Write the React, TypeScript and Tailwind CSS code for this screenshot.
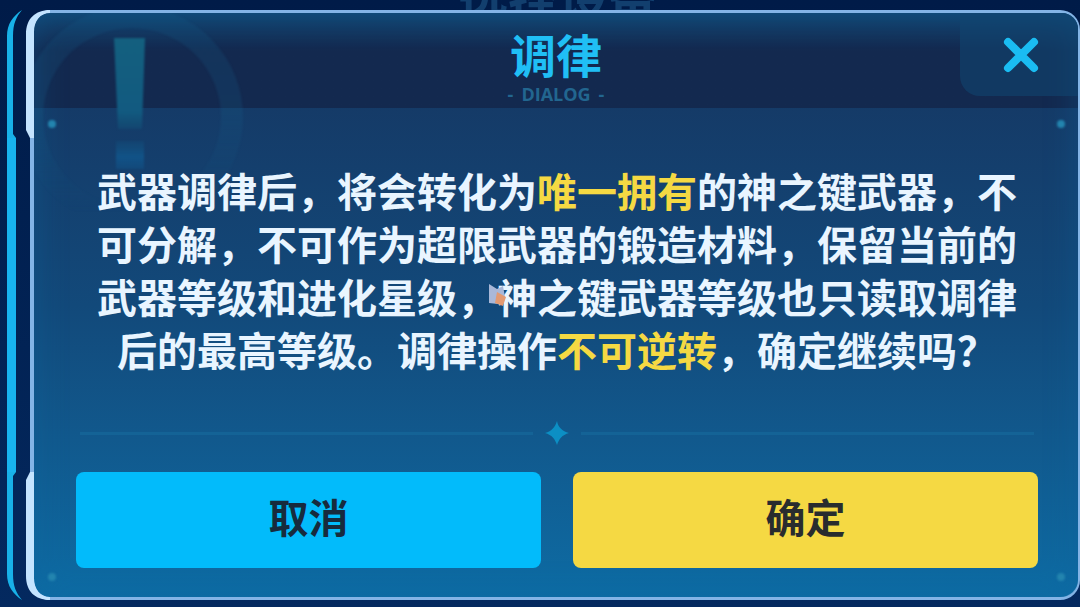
import type { ReactNode } from 'react';

const Hl = ({ children }: { children: ReactNode }) => (
  <strong className="font-bold text-[#f5d943]">{children}</strong>
);

function Rail() {
  return (
    <div className="flex w-[9px] shrink-0 flex-col" aria-hidden="true">
      <svg className="h-32 w-4 shrink-0" viewBox="0 0 16 128" fill="#18b1e8">
        <path d="M15 0C6 6 0 14 0 26V128H9L6 124V26C6 14 9 7 15 0Z" />
      </svg>
      <div className="flex-1 bg-[#18b4ef]" />
      <svg className="h-32 w-4 shrink-0" viewBox="0 0 16 128" fill="#18b1e8">
        <path d="M15 128C6 122 0 114 0 102V0H9L6 4V102C6 114 9 121 15 128Z" />
      </svg>
    </div>
  );
}

function Cap({ className }: { className: string }) {
  return (
    <svg className={`absolute -left-2 h-32 w-6 ${className}`} viewBox="0 0 24 128" fill="#c4e4ff" aria-hidden="true">
      <path d="M24 0C9 0 0 9 0 24V120L4 128H8V22C8 11 14 3 24 3Z" />
    </svg>
  );
}

function Ghost() {
  return (
    <svg className="absolute top-0 left-0 h-[200px] w-[240px] blur-[1px]" viewBox="0 0 240 200" fill="none" aria-hidden="true">
      <defs>
        <linearGradient id="ring" x1="0" y1="0" x2="0" y2="200" gradientUnits="userSpaceOnUse">
          <stop offset="0" stopColor="#17608c" stopOpacity="0.2" />
          <stop offset="0.5" stopColor="#17608c" stopOpacity="0.22" />
          <stop offset="1" stopColor="#17608c" stopOpacity="0" />
        </linearGradient>
        <linearGradient id="mark" x1="0" y1="24" x2="0" y2="160" gradientUnits="userSpaceOnUse">
          <stop offset="0" stopColor="#14607f" />
          <stop offset="0.55" stopColor="#125a80" />
          <stop offset="0.72" stopColor="#125a80" stopOpacity="0.1" />
          <stop offset="0.88" stopColor="#10619a" stopOpacity="0.6" />
          <stop offset="1" stopColor="#10619a" stopOpacity="0.2" />
        </linearGradient>
      </defs>
      <circle cx="98" cy="104" r="100" stroke="url(#ring)" strokeWidth="22" />
      <path d="M80 25H111L108 116H84ZM82 128H110V156H82Z" fill="url(#mark)" />
    </svg>
  );
}

const Dot = ({ className }: { className: string }) => (
  <span className={`absolute size-2 rounded-full bg-[#2384ae] blur-[1px] ${className}`} />
);

const Divider = () => (
  <div className="mt-[45px] flex items-center gap-3 px-1" aria-hidden="true">
    <span className="h-[3px] flex-1 bg-[#15689a]/70" />
    <svg className="size-6" viewBox="0 0 24 24" fill="#0c8fc4">
      <path d="M12 0C13 6 17 10 24 12C17 14 14 18 12 24C10 18 7 14 0 12C7 10 10 6 12 0Z" />
    </svg>
    <span className="h-[3px] flex-1 bg-[#15689a]/70" />
  </div>
);

export default function App() {
  return (
    <main className="relative flex min-h-screen gap-[14px] overflow-hidden bg-linear-to-b from-[#001b48] to-[#04295f] pt-[10px] pb-[7px] pl-[7px] font-['Noto_Sans_CJK_SC',sans-serif] font-bold">
      <p className="absolute inset-x-0 -top-7 pl-9 text-center text-[50px] leading-[50px] text-[#123f6e]" aria-hidden="true">
        选择设备
      </p>
      <Rail />

      <section
        role="dialog"
        aria-labelledby="dialog-title"
        className="relative flex flex-1 flex-col rounded-[20px] border-y-[3px] border-r-2 border-l-4 border-[#83b4e6] bg-linear-to-b from-[#15345f] via-[#12497a] to-[#0d6ca4]"
      >
        <div className="absolute inset-0 overflow-hidden rounded-[16px]">
          <div className="h-[95px] bg-linear-to-b from-[#11436f] via-[#13294f] via-40% to-[#13294f]" />
          <div className="absolute inset-0 shadow-[inset_0_0_32px_#0c66a066]" />
          <Ghost />
        </div>
        <Cap className="-top-[3px]" />
        <Cap className="-bottom-[3px] -scale-y-100" />
        <Dot className="top-[107px] left-[14px]" />
        <Dot className="top-[107px] right-[13px]" />
        <Dot className="bottom-[16px] left-[14px]" />
        <Dot className="right-[13px] bottom-[16px]" />

        <header className="relative flex h-[95px] flex-col items-center pt-[14px]">
          <h1 id="dialog-title" className="text-[46px] leading-[52px] text-[#20bff5]">
            调律
          </h1>
          <p className="mt-1 flex gap-2 font-['Open_Sans',sans-serif] text-lg leading-[22px] font-bold text-[#22668f]">
            <span>-</span>
            DIALOG
            <span>-</span>
          </p>
          <button
            type="button"
            aria-label="关闭"
            className="absolute top-0 right-0 flex h-[83px] w-[118px] items-center justify-center rounded-tr-[16px] rounded-bl-[20px] bg-[#10456f]/60 pl-1"
          >
            <svg className="size-9" viewBox="0 0 36 36" stroke="#1abcf2" strokeWidth="8" strokeLinecap="round">
              <path d="M5 5L31 31M31 5L5 31" />
            </svg>
          </button>
        </header>

        <div className="relative flex flex-1 flex-col pt-14 pr-10 pb-[29px] pl-[42px]">
          <p className="px-5 text-center text-[40px] leading-[53px] text-[#e9f5ff]">
            武器调律后，将会转化为<Hl>唯一拥有</Hl>的神之键武器，不可分解，不可作为超限武器的锻造材料，保留当前的武器等级和进化星级，
            <span className="relative">
              神
              <svg className="absolute -left-2 top-4 h-7 w-5" viewBox="0 0 20 28" aria-hidden="true">
                <path d="M0 1L8 6L14 3L16 14L9 21L0 20Z" fill="#a9b8d8" />
                <path d="M8 9L17 14L14 23L6 20Z" fill="#e29a72" />
              </svg>
            </span>
            之键武器等级也只读取调律后的最高等级。调律操作<Hl>不可逆转</Hl>，确定继续吗？
          </p>
          <Divider />
          <div className="mt-[27px] grid grid-cols-2 gap-8 text-[40px]">
            <button type="button" className="h-24 rounded-lg bg-[#02bbfb] pb-2 text-[#172b3d]">取消</button>
            <button type="button" className="h-24 rounded-lg bg-[#f5d943] pb-2 text-[#292c2e]">确定</button>
          </div>
        </div>
      </section>
    </main>
  );
}
